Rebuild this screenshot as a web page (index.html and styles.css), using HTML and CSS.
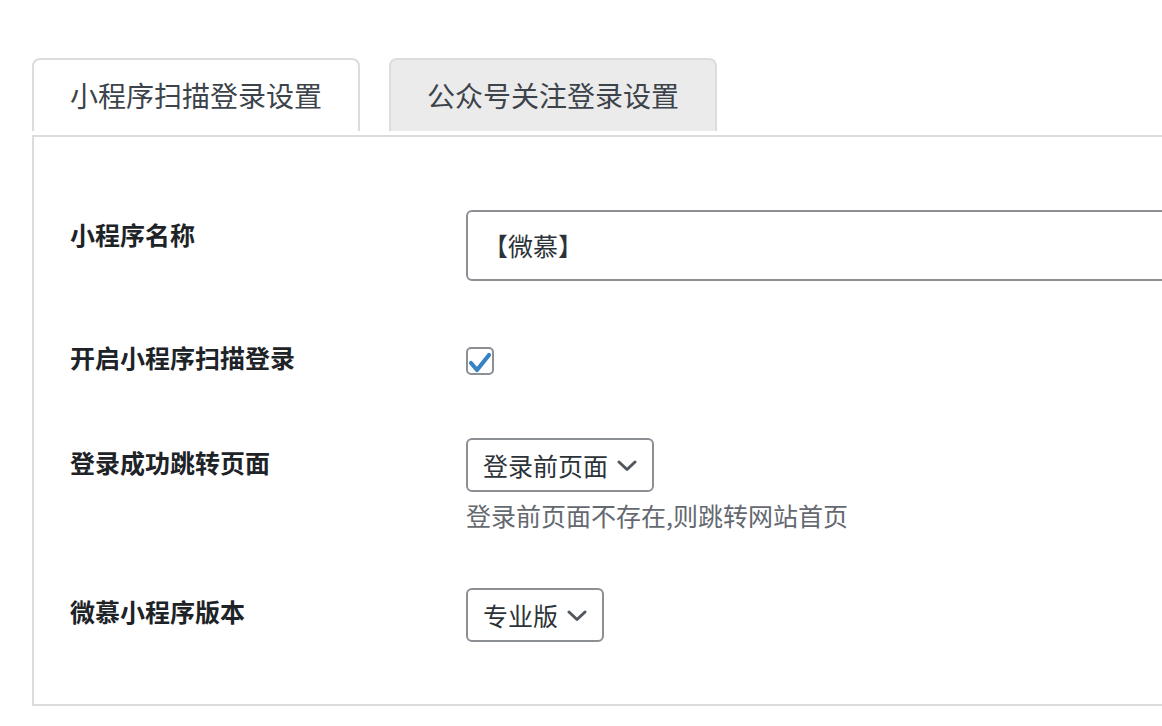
FILE: index.html
```html
<!DOCTYPE html>
<html>
<head>
    <meta charset="utf-8">
    <link rel="stylesheet" href="styles.css">
</head>
<body>
  <div class="wrap">
    <div class="tabs">
      <div class="tab tab-active">小程序扫描登录设置</div>
      <div class="tab">公众号关注登录设置</div>
    </div>
    <div class="panel">
      <div class="row row-name">
        <div class="label">小程序名称</div>
        <div class="field">
          <div class="text-input">【微慕】</div>
        </div>
      </div>
      <div class="row row-check">
        <div class="label">开启小程序扫描登录</div>
        <div class="field">
          <div class="checkbox">
            <svg width="28" height="28" viewBox="0 0 28 28">
              <polyline points="5,16 11,23 23,8" fill="none" stroke="#3582c4" stroke-width="4.2" stroke-linecap="round" stroke-linejoin="round"/>
            </svg>
          </div>
        </div>
      </div>
      <div class="row row-redirect">
        <div class="label">登录成功跳转页面</div>
        <div class="field">
          <div class="select">
            <span>登录前页面</span>
            <svg class="chevron" width="22" height="12" viewBox="0 0 22 12">
              <polyline points="3,2 11,9.5 19,2" fill="none" stroke="#50575e" stroke-width="3" stroke-linecap="round" stroke-linejoin="round"/>
            </svg>
          </div>
          <p class="desc">登录前页面不存在,则跳转网站首页</p>
        </div>
      </div>
      <div class="row row-version">
        <div class="label">微慕小程序版本</div>
        <div class="field">
          <div class="select">
            <span>专业版</span>
            <svg class="chevron" width="22" height="12" viewBox="0 0 22 12">
              <polyline points="3,2 11,9.5 19,2" fill="none" stroke="#50575e" stroke-width="3" stroke-linecap="round" stroke-linejoin="round"/>
            </svg>
          </div>
        </div>
      </div>
    </div>
  </div>
</body>
</html>
```

FILE: styles.css
```css
/* page */
body {
    margin: 0;
    background-color: #fff;
    font-family: "Noto Sans CJK SC", "Noto Sans", sans-serif;
    color: #1d2327;
    overflow: hidden;
}

.wrap {
    padding-top: 58px;
    padding-left: 32px;
    overflow: hidden;
}

/* tabs on top of the panel */
.tabs {
    display: flex;
    gap: 29px;
    margin-bottom: 4px;
}

.tab {
    width: 324px;
    height: 71px;
    line-height: 71px;
    text-align: center;
    font-size: 28px;
    color: #3c434a;
    border: 2px solid #dcdcde;
    border-bottom: none;
    border-radius: 8px 8px 0 0;
    background-color: #ebebeb;
}

.tab-active {
    background-color: #fff;
}

/* settings panel */
.panel {
    width: 1200px;
    border: 2px solid #dcdcde;
    padding: 73px 0 62px 36px;
}

.row {
    display: flex;
    align-items: flex-start;
}

.label {
    width: 396px;
    flex-shrink: 0;
    font-size: 25px;
    line-height: 34px;
    font-weight: bold;
    color: #1d2327;
}

.row-name .label { margin-top: 7px; }
.row-check { margin-top: 61px; }
.row-check .label { margin-top: -2px; }
.row-redirect { margin-top: 63px; }
.row-redirect .label { margin-top: 7px; }
.row-version { margin-top: 56px; }
.row-version .label { margin-top: 6px; }

/* fields */
.text-input {
    width: 760px;
    height: 67px;
    line-height: 67px;
    border: 2px solid #8c8f94;
    border-radius: 6px;
    padding-left: 15px;
    font-size: 25px;
    color: #2c3338;
    box-sizing: content-box;
}

.checkbox {
    width: 24px;
    height: 24px;
    margin-top: 5px;
    border: 2px solid #8c8f94;
    border-radius: 5px;
    position: relative;
}

.checkbox svg {
    position: absolute;
    left: -2px;
    top: -2px;
}

.select {
    display: inline-flex;
    align-items: center;
    height: 50px;
    border: 2px solid #8c8f94;
    border-radius: 6px;
    padding: 0 14px 0 15px;
    font-size: 25px;
    color: #2c3338;
}

.chevron {
    margin-left: 8px;
    margin-top: 2px;
}

.desc {
    margin: 6px 0 0 0;
    font-size: 25px;
    line-height: 34px;
    color: #646970;
}
```
